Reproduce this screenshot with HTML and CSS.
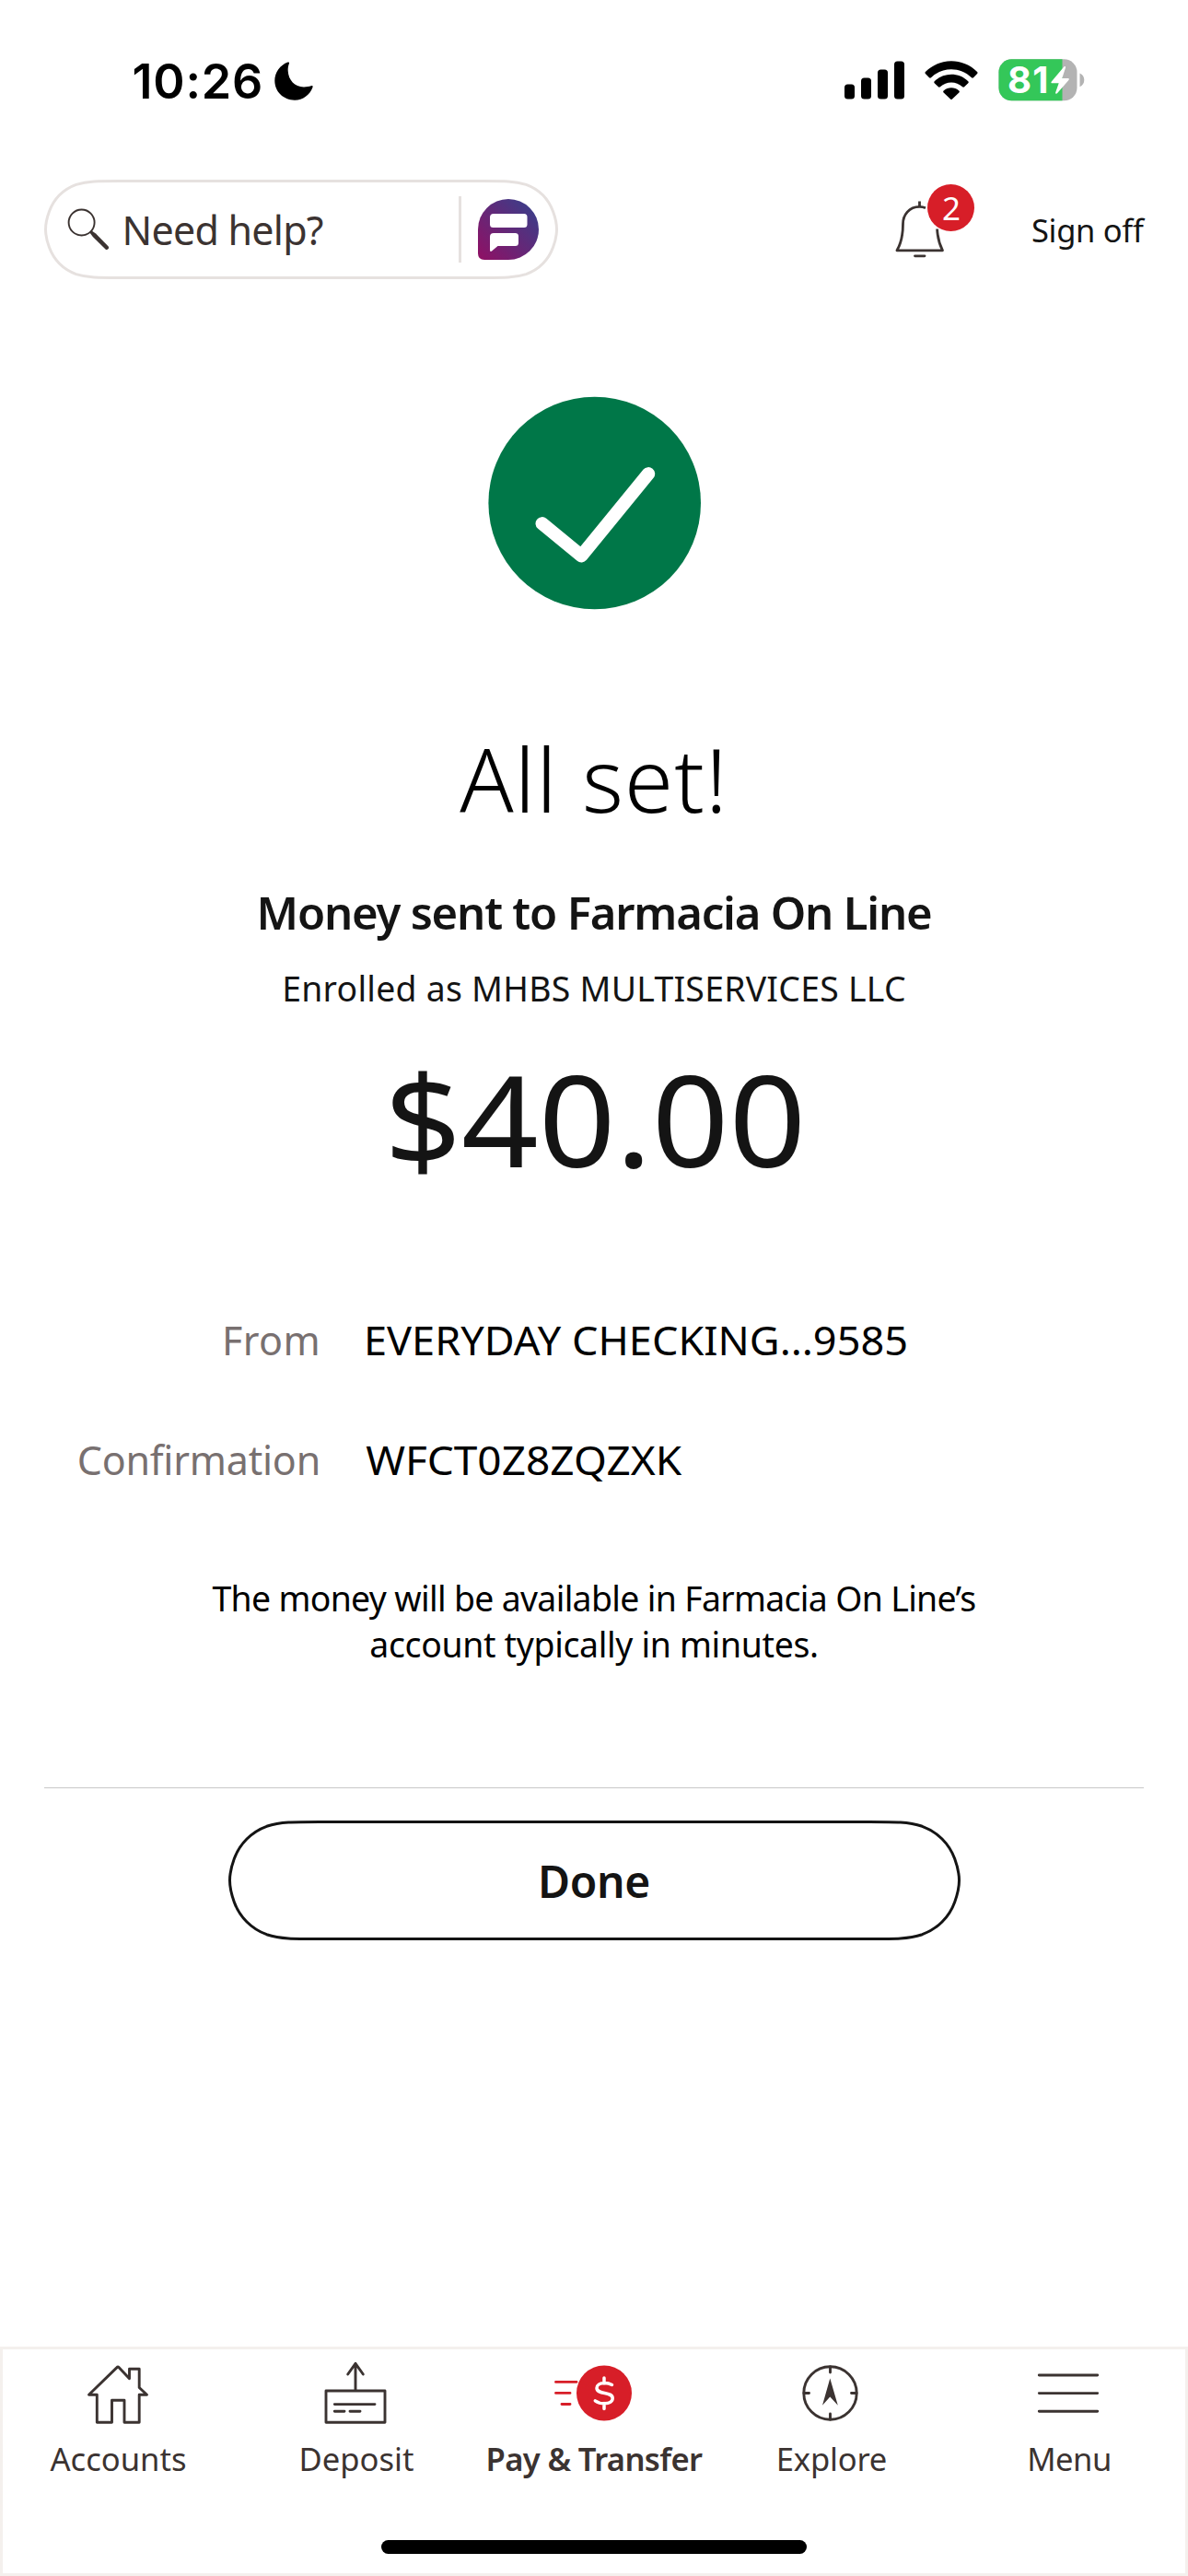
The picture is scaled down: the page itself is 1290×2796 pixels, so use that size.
FILE: index.html
```html
<!DOCTYPE html>
<html lang="en">
<head>
<meta charset="utf-8">
<title>Pay &amp; Transfer – All set!</title>
<link rel="stylesheet" href="styles.css">
</head>
<body>
<div class="screen">
  <div class="status-bar">
    <div class="status-left">
      <span class="clock">10:26</span>
      <svg class="moon" width="42" height="42" viewBox="0 0 42 42"><path d="M14.5 0.6C15.6 0 16.3 0.8 15.9 2C14.9 4.800 14.500 7.500 14.700 10C15.300 20 22 27.500 32 27.400C34.800 27.400 37.500 26.900 39.800 26.200C41.200 25.800 42 26.500 41.500 27.800C38.400 36.200 31 41.700 22 41.700C9.800 41.700 0.300 32.600 0.300 20.600C0.300 11.800 6.200 3.600 14.500 0.600Z"/></svg>
    </div>
    <div class="status-right">
      <svg width="66" height="42" viewBox="0 0 66 42"><rect x="0" y="25.500" width="11" height="16" rx="3.500"/><rect x="18" y="18.500" width="11" height="23" rx="3.500"/><rect x="36" y="9.500" width="11" height="32" rx="3.500"/><rect x="54" y="0.500" width="11" height="41" rx="3.500"/></svg>
      <svg class="wifi" width="58" height="42" viewBox="0 0 58 42"><path d="M0.900 12C16.500 -3.700 41.500 -3.700 57.100 12C57.700 12.600 57.700 13.400 57.100 14L53 18.200C52.400 18.800 51.600 18.800 51 18.200C38.700 6.200 19.300 6.200 7 18.200C6.400 18.800 5.600 18.800 5 18.200L0.900 14C0.300 13.400 0.300 12.600 0.900 12Z"/><path d="M10.700 22.200C20.900 12.400 37.100 12.400 47.300 22.200C47.900 22.800 47.900 23.600 47.300 24.200L43.100 28.300C42.500 28.900 41.700 28.900 41.100 28.300C34.300 22 23.700 22 16.900 28.300C16.300 28.900 15.500 28.900 14.900 28.300L10.700 24.200C10.100 23.600 10.100 22.800 10.700 22.200Z"/><path d="M20.600 32.400C25.400 28.100 32.600 28.100 37.400 32.400C38 33 38 33.800 37.400 34.400L30 41.600C29.400 42.200 28.600 42.200 28 41.600L20.600 34.400C20 33.800 20 33 20.600 32.400Z"/></svg>
      <div class="battery">
        <svg width="94" height="46" viewBox="0 0 94 46">
          <clipPath id="cell"><rect x="0.500" y="0.300" width="85" height="45" rx="14"/></clipPath>
          <g clip-path="url(#cell)"><path fill="#b3b3b3" d="M0 0H86V46H0z"/><path fill="#34c759" d="M0 0H69.500V46H0z"/></g>
          <path fill="#b3b3b3" d="M88.500 15.500C91.500 16.600 93.300 19.400 93.300 22.800S91.500 29 88.500 30.200z"/>
          <path fill="#fff" d="M71.300 8.600L57.800 24.500C57 25.500 57.400 26.300 58.500 26.300H65.700L62.200 36.200C61.800 37.700 63.100 38.300 64.200 37L76.400 22.900C77.300 21.900 76.900 21 75.800 21H69.300L73 9.600C73.400 8.200 72.300 7.500 71.300 8.600Z"/>
        </svg>
        <span class="battery-level">81</span>
      </div>
    </div>
  </div>

  <header class="header">
    <div class="search">
      <svg class="search-outline" width="558" height="108" viewBox="0 0 558 108"><path d="M81.800 1.500H476.200C499.400 1.500 510.900 1.500 523.300 5.400C536.900 10.400 547.600 21.100 552.600 34.700C554.500 39.800 556.500 46.700 556.500 54S554.500 68.200 552.600 73.300C547.600 86.900 536.900 97.600 523.300 102.600C510.900 106.500 499.400 106.500 476.200 106.500H81.800C58.600 106.500 47.100 106.500 34.700 102.600C21.100 97.600 10.400 86.900 5.400 73.300C3.500 68.200 1.500 61.300 1.500 54S3.500 39.800 5.400 34.700C10.400 21.100 21.100 10.400 34.700 5.400C47.100 1.500 58.600 1.500 81.800 1.500Z"/></svg>
      <svg class="glass" width="46" height="46" viewBox="0 0 46 46"><circle cx="15.600" cy="15.500" r="14" fill="none" stroke="#3b3331" stroke-width="1.900"/><path fill="#3b3331" d="M24.300 26.300L26.300 24.300L31 27.500L44.500 41.200C46.300 43.400 43.500 46.200 41.500 44.500L27.800 31z"/></svg>
      <span class="search-text">Need help?</span>
      <span class="search-divider"></span>
      <svg class="fargo" width="66" height="66" viewBox="0 0 66 66">
        <linearGradient id="fg" x1="0.050" y1="0.950" x2="0.900" y2="0.150"><stop offset="0" stop-color="#8c1266"/><stop offset="1" stop-color="#3e3c88"/></linearGradient>
        <path fill="url(#fg)" d="M33 0A33 33 0 0 1 33 66H7Q0 66 0 59V33A33 33 0 0 1 33 0Z"/>
        <path fill="#fff" d="M17 16H50Q53.500 16 53.500 19.500V27.500Q53.500 31 50 31H16.500Q13 31 13 27.500V20Q13 16 17 16ZM17 37H40.500Q44 37 44 40.500V47.500Q44 51 40.500 51H21.500L15 56.500Q13 57.800 13 55V41Q13 37 17 37Z"/>
      </svg>
    </div>
    <div class="header-actions">
      <div class="bell">
        <svg width="54" height="64" viewBox="0 0 54 64" fill="none" stroke="#3b3331" stroke-width="2.800"><path d="M26.500 1.500V7M33 8.700Q30 7.300 26.500 7.300C15 7.300 8.500 16.500 8.500 26C8.500 38 6.500 47 2 54.800H51.500C47.500 47 46 40 45.600 31.500" stroke-linejoin="round"/><path d="M21.500 60.800H32" stroke-linecap="round"/></svg>
        <span class="badge">2</span>
      </div>
      <a class="sign-off">Sign off</a>
    </div>
  </header>

  <main class="main">
    <svg class="success" width="232" height="232" viewBox="0 0 232 232"><circle cx="116.700" cy="116" r="115.300" fill="#007748"/><path d="M59.700 138.300L102.300 173.300L175 84.300" fill="none" stroke="#fff" stroke-width="14.400" stroke-linecap="round" stroke-linejoin="round"/></svg>
    <h1 class="title">All set!</h1>
    <h2 class="recipient">Money sent to Farmacia On Line</h2>
    <p class="enrolled">Enrolled as MHBS MULTISERVICES LLC</p>
    <p class="amount">$40.00</p>
    <dl class="details">
      <dt class="label-from">From</dt><dd class="value-from">EVERYDAY CHECKING...9585</dd>
      <dt class="label-conf">Confirmation</dt><dd class="value-conf">WFCT0Z8ZQZXK</dd>
    </dl>
    <p class="note"><span class="note-first">The money will be available in Farmacia On Line’s</span><br><span class="note-second">account typically in minutes.</span></p>
    <hr class="rule">
    <button class="done">
      <svg class="done-outline" width="795" height="130" viewBox="0 0 795 130"><path d="M98.600 1.500H696.400C724.400 1.500 738.400 1.500 753.400 6.300C769.800 12.200 782.800 25.200 788.700 41.600C791 47.900 793.500 56.100 793.500 65S791 82.100 788.700 88.400C782.800 104.800 769.800 117.800 753.400 123.700C738.400 128.500 724.400 128.500 696.400 128.500H98.600C70.600 128.500 56.600 128.500 41.600 123.700C25.200 117.800 12.200 104.800 6.300 88.400C4 82.100 1.500 73.900 1.500 65S4 47.900 6.300 41.600C12.200 25.200 25.200 12.200 41.600 6.300C56.600 1.500 70.600 1.500 98.600 1.500Z"/></svg>
      <span>Done</span>
    </button>
  </main>

  <nav class="tabs">
    <a class="tab"><svg class="icon" width="90" height="72" viewBox="0 0 90 72"><path d="M44 8.600Q45 7.500 46 8.600L57.500 20.800V10.300H68.200V30.500L76.500 38.300H68.200V68.300H52V44.300H38.500V68.300H22.300V38.300H13.500Z"/></svg><span class="t-accounts">Accounts</span></a>
    <a class="tab"><svg class="icon" width="90" height="72" viewBox="0 0 90 72"><path d="M13 34H77V68.300H13ZM45 34V4.500M36.700 16L45 4.300L53.300 16M22.300 48.600H66M22.300 56.300H33M39 56.300H50"/></svg><span class="t-deposit">Deposit</span></a>
    <a class="tab tab-active"><svg class="icon" width="90" height="72" viewBox="0 0 90 72"><path stroke="#d71e28" d="M3.500 24.400H26M3.500 36.400H19M10 48.500H19"/><circle cx="56" cy="36.500" r="30" fill="#d71e28" stroke="none"/><path stroke="#fff" stroke-width="3.500" d="M56 20V26M56 47.500V53.500M64.500 27.500Q61 25.600 56.500 25.600C51 25.600 48 28 48 31C48 38.500 65.200 34.500 65.200 42C65.200 45.600 61.500 47.800 56.500 47.800Q50.500 47.800 46.300 44.800"/></svg><span class="t-pay">Pay &amp; Transfer</span></a>
    <a class="tab"><svg class="icon" width="90" height="72" viewBox="0 0 90 72"><circle cx="44.500" cy="36.500" r="28.700"/><path d="M44.500 8V14M44.500 59V65M16 36.500H21.500M67.500 36.500H73"/><path fill="#3b3331" stroke="none" d="M44.300 20.500L52.800 49.700L44.300 40.500L36 49.700Z"/></svg><span class="t-explore">Explore</span></a>
    <a class="tab"><svg class="icon" width="90" height="72" viewBox="0 0 90 72"><path d="M13.300 17H76.700M13.300 36.600H76.700M13.300 56.200H76.700"/></svg><span class="t-menu">Menu</span></a>
    <div class="home-indicator"></div>
  </nav>
</div>
</body>
</html>
```
FILE: styles.css
```css
* { box-sizing: border-box; margin: 0; padding: 0; }
body {
  width: 1290px;
  background: #fff;
  color: #141414;
  font-family: "Noto Sans", "Open Sans", sans-serif;
}
svg { display: block; flex: none; }
.screen { display: flex; flex-direction: column; width: 1290px; height: 2796px; overflow: hidden; white-space: nowrap; }

/* Status bar */
.status-bar { display: flex; justify-content: space-between; height: 195px; padding: 64px 112px 0 143.500px; color: #000; }
.status-left, .status-right { display: flex; align-items: flex-start; height: 46px; }
.clock { font: 600 52px/50px "Inter", sans-serif; letter-spacing: 0.800px; }
.moon { margin: 3px 0 0 12px; }
.status-right > svg { margin-top: 1.500px; }
.status-right .wifi { margin-left: 21px; }
.battery { position: relative; margin-left: 22px; }
.battery-level { position: absolute; left: 10px; top: 0; color: #fff; font: 700 40px/46px "Inter", sans-serif; letter-spacing: 1.300px; }

/* Header */
.header { display: flex; justify-content: space-between; height: 108px; padding: 0 48px; }
.search { position: relative; display: flex; align-items: center; width: 558px; height: 108px; padding: 0 21px 0 25px; }
.search-outline, .done-outline { position: absolute; left: 0; top: 0; fill: none; stroke-width: 3px; }
.search-outline { stroke: #e6e1df; }
.search-text { margin: 2px auto 0 13.500px; color: #3b3331; font-size: 43px; line-height: 60px; letter-spacing: -0.760px; }
.search-divider { width: 3px; height: 72px; margin-right: 18px; background: #e6e1df; }
.header-actions { display: flex; }
.bell { position: relative; width: 54px; height: 64px; margin: 22px 94px 0 0; }
.badge { position: absolute; left: 35.500px; top: -17.500px; width: 51px; height: 51px; border-radius: 50%; background: #d71e28; color: #fff; font-size: 35px; line-height: 51px; text-align: center; }
.sign-off { font-size: 34.500px; line-height: 50px; padding: 30px 0.500px 0 0; letter-spacing: -0.300px; }

/* Confirmation */
.main { display: flex; flex-direction: column; align-items: center; flex: 1; padding: 127px 48px 0; }
.title { margin-top: 122.500px; color: #000; font-weight: 300; font-size: 96px; line-height: 120px; letter-spacing: 1.140px; }
.recipient { margin-top: 55.500px; font-weight: 600; font-size: 49px; line-height: 60px; letter-spacing: -1.200px; }
.enrolled { margin-top: 27.500px; font-size: 37.400px; line-height: 50px; letter-spacing: 0.250px; }
.amount { margin-top: 36.500px; padding-left: 2px; font-size: 137px; line-height: 160px; transform: scaleX(1.069); }
.details { display: grid; grid-template-columns: 300px 1fr; gap: 70px 47px; width: 100%; margin-top: 131.300px; font-size: 43px; line-height: 60px; }
.details dt { color: #787070; text-align: right; }
.details dd { color: #000; transform-origin: left; }
.label-conf { letter-spacing: -0.220px; }
.label-from { letter-spacing: 0.390px; }
.value-from { transform: scaleX(1.048); }
.value-conf { padding-left: 2px; transform: scaleX(1.069); }
.note { margin-top: 95.200px; color: #000; font-size: 37.400px; line-height: 50px; text-align: center; }
.note-first { letter-spacing: -0.670px; }
.note-second { letter-spacing: -0.330px; }
.rule { width: 100%; height: 1px; margin-top: 129.500px; border: 0; background: #c8c8c8; }
.done { position: relative; width: 795px; height: 130px; margin-top: 35px; border: 0; background: none; color: #141414; font: 600 48px/132px "Noto Sans", sans-serif; letter-spacing: -0.330px; }
.done-outline { stroke: #141414; }

/* Bottom tabs */
.tabs { display: grid; grid-template-columns: repeat(5, 258px); grid-template-rows: 1fr 39px; justify-content: center; height: 249px; padding-top: 11px; border: 3px solid #f4f0ed; color: #3b3331; font-size: 34.600px; line-height: 40px; }
.tab { display: flex; flex-direction: column; align-items: center; }
.icon { margin: 0 2px 15.500px 0; fill: none; stroke: #3b3331; stroke-width: 2.900px; stroke-linecap: round; stroke-linejoin: round; }
.tab-active { font-weight: 600; }
.tab-active .icon { margin-right: 0; }
.t-accounts { margin-right: 1px; }
.t-explore { letter-spacing: -0.200px; }
.t-pay { letter-spacing: -0.640px; }
.t-menu { letter-spacing: -0.480px; }
.home-indicator { grid-column: 1 / -1; justify-self: center; width: 462px; height: 15px; margin-top: 3px; border-radius: 8px; background: #000; }
```
